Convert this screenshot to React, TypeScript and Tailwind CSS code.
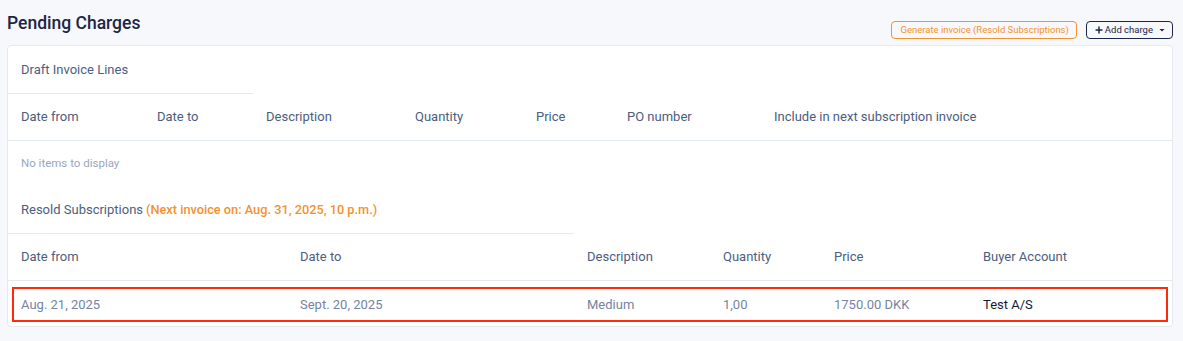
import { Plus } from "lucide-react";

const draftCols = ["Date from", "Date to", "Description", "Quantity", "Price", "PO number", "Include in next subscription invoice"];
const resoldCols = ["Date from", "Date to", "Description", "Quantity", "Price", "Buyer Account"];

export default function App() {
  return (
    <div
      className="min-h-[341px] w-[1183px] bg-[#f7f8fb] pl-[7px] pr-[10px]"
      style={{ fontFamily: "Roboto, 'Liberation Sans', sans-serif" }}
    >
      {/* Header */}
      <div className="flex h-[45px] justify-between">
        <h1 className="pt-[11px] text-[17.5px] font-medium leading-[24px] text-[#1c2647]">Pending Charges</h1>
        <div className="mt-[21px] flex h-[18px] gap-[9px]">
          <button className="rounded-[4px] border border-[#f5912e] pl-[8px] pr-[7px] text-[9.5px] leading-[16px] text-[#f5912e]">
            Generate invoice (Resold Subscriptions)
          </button>
          <button className="flex items-center gap-[1px] rounded-[4px] border border-[#1c2647] pl-[7px] pr-[5px] text-[9.5px] leading-[16px] text-[#1c2647]">
            <Plus size={10} strokeWidth={3.5} />
            <span>Add charge</span>
            <svg width="10" height="10" viewBox="0 0 10 10" className="ml-[3px]">
              <path d="M2.5 4 L7.5 4 L5 6.5 Z" fill="#1c2647" />
            </svg>
          </button>
        </div>
      </div>

      {/* Card */}
      <div className="rounded-[4px] border border-[#e4e9f2] bg-white text-[13px]">
        {/* Draft invoice lines */}
        <div className="grid grid-cols-[136px_109px_149px_121px_91px_147px_1fr]">
          <div className="col-span-2 flex h-[48px] items-center border-b border-[#e4e9f2] px-[13px] text-[#4d5d7e]">
            Draft Invoice Lines
          </div>
          <div className="col-span-5" />
          {draftCols.map((c) => (
            <div key={c} className="flex h-[47px] items-center border-b border-[#e4e9f2] px-[13px] text-[#4d5d7e]">
              {c}
            </div>
          ))}
          <div className="col-span-7 flex h-[46px] items-center px-[13px] text-[11.5px] text-[#9aa7c0]">No items to display</div>
        </div>

        {/* Resold subscriptions */}
        <div className="grid grid-cols-[279px_287px_136px_111px_149px_1fr]">
          <div className="col-span-2 flex h-[47px] items-center border-b border-[#e4e9f2] px-[13px] text-[#4d5d7e]">
            <span>Resold Subscriptions</span>
            <span className="ml-[3px] text-[12.75px] font-medium text-[#f5912e]">(Next invoice on: Aug. 31, 2025, 10 p.m.)</span>
          </div>
          <div className="col-span-4" />
          {resoldCols.map((c) => (
            <div key={c} className="flex h-[47px] items-center border-b border-[#e4e9f2] px-[13px] text-[#4d5d7e]">
              {c}
            </div>
          ))}
        </div>
        <div className="px-[4px] pb-[4px] pt-[6px]">
          <div className="grid h-[35px] grid-cols-[273px_287px_136px_111px_149px_1fr] items-center border-2 border-[#ff2a0a] text-[#7584a1]">
            <div className="pl-[7px]">Aug. 21, 2025</div>
            <div className="px-[13px]">Sept. 20, 2025</div>
            <div className="px-[13px]">Medium</div>
            <div className="px-[13px]">1,00</div>
            <div className="px-[13px]">1750.00 DKK</div>
            <div className="px-[13px] text-[#151a33]">Test A/S</div>
          </div>
        </div>
      </div>
    </div>
  );
}
